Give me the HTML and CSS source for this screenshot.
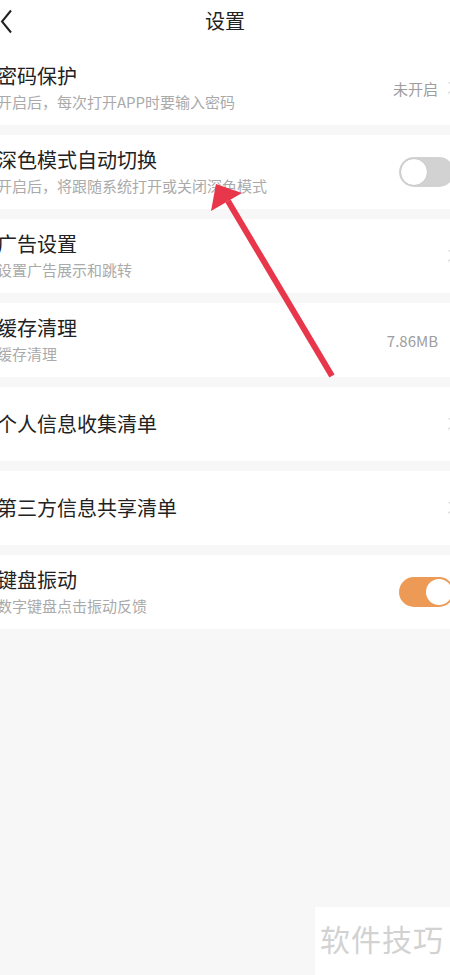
FILE: index.html
```html
<!DOCTYPE html>
<html lang="zh-CN">
<head>
<meta charset="utf-8">
<title>设置</title>
<link rel="stylesheet" href="styles.css">
</head>
<body>
<div class="page">
  <header class="header">
    <svg class="back" width="14" height="26" viewBox="0 0 14 26"><path d="M12 1.5 L3 12.5 L12 23.5" fill="none" stroke="#222" stroke-width="2"/></svg>
    <div class="title">设置</div>
  </header>
  <div class="list">
    <div class="row">
      <div class="text"><div class="name">密码保护</div><div class="desc">开启后，每次打开APP时要输入密码</div></div>
      <div class="right"><span class="value">未开启</span><span class="chev"></span></div>
    </div>
    <div class="row">
      <div class="text"><div class="name">深色模式自动切换</div><div class="desc">开启后，将跟随系统打开或关闭深色模式</div></div>
      <div class="right"><span class="switch"><span class="knob"></span></span></div>
    </div>
    <div class="row">
      <div class="text"><div class="name">广告设置</div><div class="desc">设置广告展示和跳转</div></div>
      <div class="right"><span class="chev"></span></div>
    </div>
    <div class="row">
      <div class="text"><div class="name">缓存清理</div><div class="desc">缓存清理</div></div>
      <div class="right"><span class="value">7.86MB</span><span class="chev chev-hidden"></span></div>
    </div>
    <div class="row">
      <div class="text"><div class="name">个人信息收集清单</div></div>
      <div class="right"><span class="chev"></span></div>
    </div>
    <div class="row">
      <div class="text"><div class="name">第三方信息共享清单</div></div>
      <div class="right"><span class="chev"></span></div>
    </div>
    <div class="row">
      <div class="text"><div class="name">键盘振动</div><div class="desc">数字键盘点击振动反馈</div></div>
      <div class="right"><span class="switch on"><span class="knob"></span></span></div>
    </div>
  </div>
</div>
<svg class="arrow" width="450" height="400" viewBox="0 0 450 400">
  <line x1="228" y1="201" x2="332" y2="376" stroke="#e8364b" stroke-width="6"/>
  <polygon points="216,184 211,211 242,193" fill="#e8364b"/>
</svg>
<div class="watermark">软件技巧</div>
</body>
</html>
```
FILE: styles.css
```css
html, body {
  margin: 0;
  padding: 0;
}
body {
  width: 450px;
  height: 975px;
  overflow: hidden;
  background: #f7f7f7;
  font-family: "Noto Sans CJK SC", "Noto Sans", sans-serif;
  position: relative;
}
.page {
  width: 462px;
  margin-left: -3px;
}
.header {
  height: 51px;
  background: #fff;
  position: relative;
  display: flex;
  justify-content: center;
}
.back {
  position: absolute;
  left: 2px;
  top: 9px;
}
.title {
  margin-top: 7px;
  margin-left: -6px;
  font-size: 20px;
  line-height: 28px;
  color: #222;
}
.list {
  display: flex;
  flex-direction: column;
  gap: 10px;
}
.row {
  background: #fff;
  min-height: 74px;
  display: flex;
  align-items: center;
  justify-content: space-between;
  padding: 0 5px 0 0;
  box-sizing: border-box;
}
.text {
  display: flex;
  flex-direction: column;
  gap: 2px;
}
.name {
  font-size: 20px;
  line-height: 26px;
  color: #222;
}
.desc {
  font-size: 15px;
  line-height: 22px;
  color: #aaa;
}
.right {
  display: flex;
  align-items: center;
  gap: 9px;
}
.value {
  font-size: 15px;
  color: #9d9d9d;
}
.chev {
  width: 7px;
  height: 12px;
  position: relative;
  overflow: hidden;
}
.chev::before {
  content: "";
  position: absolute;
  width: 8px;
  height: 8px;
  border-top: 1.5px solid #cfcfcf;
  border-right: 1.5px solid #cfcfcf;
  transform: rotate(45deg);
  left: -3px;
  top: 1px;
}
.chev-hidden {
  visibility: hidden;
}
.switch {
  width: 55px;
  height: 30px;
  border-radius: 15px;
  background: #d2d2d2;
  position: relative;
  box-sizing: border-box;
}
.knob {
  position: absolute;
  top: 1px;
  left: 1px;
  width: 28px;
  height: 28px;
  border-radius: 50%;
  background: #fff;
  box-sizing: border-box;
  border: 1px solid #c8c8c8;
}
.switch.on {
  background: #ec9a55;
}
.switch.on .knob {
  left: auto;
  right: 2px;
  top: 2px;
  width: 26px;
  height: 26px;
  border: none;
}
.arrow {
  position: absolute;
  left: 0;
  top: 0;
}
.watermark {
  position: absolute;
  left: 315px;
  top: 907px;
  width: 140px;
  height: 68px;
  background: #fff;
  color: #d2d2d2;
  font-size: 30px;
  line-height: 62px;
  padding-left: 5px;
  box-sizing: border-box;
  letter-spacing: 1px;
}
```
